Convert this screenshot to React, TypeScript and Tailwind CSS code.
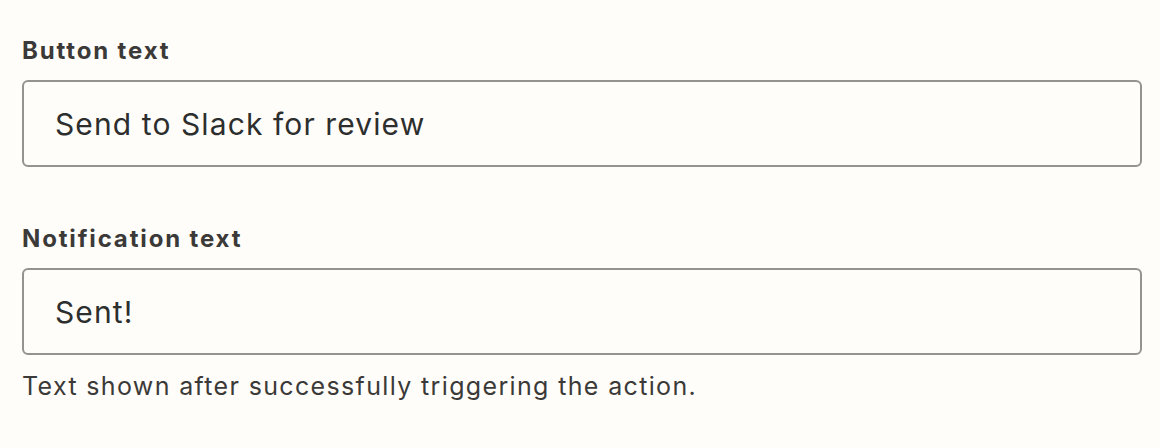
import { useState } from 'react';

// Two labelled text fields, as in the button settings panel
const Field = ({ label, value, help }: { label: string; value: string; help?: string }) => {
    const [text, setText] = useState(value);
    return (
        <div className="flex flex-col">
            <label className="text-[24px] leading-[32px] font-bold tracking-[1.85px] text-[#3b3a38]">{label}</label>
            <input
                value={text}
                onChange={e => setText(e.target.value)}
                className="mt-[13px] h-[87px] w-full rounded-[6px] border-2 border-[#95938f] bg-[#fffdf9] pl-[31px] text-[30px] tracking-[1.1px] text-[#2d2e2e] outline-none"
            />
            {help && <p className="mt-[15px] text-[25px] leading-[32px] tracking-[1.35px] text-[#3b3a38]">{help}</p>}
        </div>
    );
};

export default function App() {
    return (
        <div className="min-h-[448px] w-[1160px] bg-[#fffdf9] pl-[22px] pr-[18px] pt-[35px]" style={{ fontFamily: 'Inter, "Noto Sans", sans-serif' }}>
            <div className="flex flex-col gap-[56px]">
                <Field label="Button text" value="Send to Slack for review" />
                <Field label="Notification text" value="Sent!" help="Text shown after successfully triggering the action." />
            </div>
        </div>
    );
}
